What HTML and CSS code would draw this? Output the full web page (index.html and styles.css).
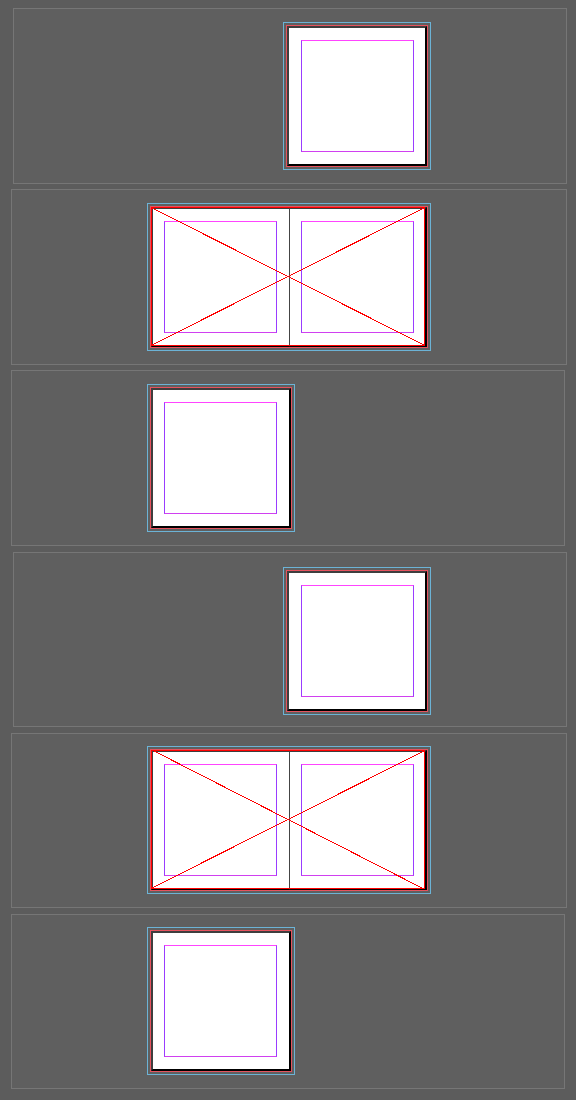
FILE: index.html
```html
<!DOCTYPE html>
<html>
<head>
<meta charset="utf-8">
<link rel="stylesheet" href="styles.css">
</head>
<body>
<div class="panel p1">
  <div class="slug">
    <div class="bleed">
      <div class="page single rp"><div class="margins"></div></div>
    </div>
  </div>
</div>
<div class="panel p2">
  <div class="slug">
    <div class="bleed">
      <div class="spread">
        <div class="page lp"><div class="margins"></div></div>
        <div class="page rp"><div class="margins"></div></div>
        <svg class="xframe" width="276" height="140" viewBox="0 0 276 140" shape-rendering="crispEdges">
          <rect x="0.5" y="0.5" width="273" height="138" fill="none" stroke="#ff0000"/>
          <line x1="1" y1="1" x2="273" y2="138" stroke="#ff0000"/>
          <line x1="1" y1="138" x2="273" y2="1" stroke="#ff0000"/>
        </svg>
      </div>
    </div>
  </div>
</div>
<div class="panel p3">
  <div class="slug">
    <div class="bleed">
      <div class="page single lp"><div class="margins"></div></div>
    </div>
  </div>
</div>
<div class="panel p4">
  <div class="slug">
    <div class="bleed">
      <div class="page single rp"><div class="margins"></div></div>
    </div>
  </div>
</div>
<div class="panel p5">
  <div class="slug">
    <div class="bleed">
      <div class="spread">
        <div class="page lp"><div class="margins"></div></div>
        <div class="page rp"><div class="margins"></div></div>
        <svg class="xframe" width="276" height="140" viewBox="0 0 276 140" shape-rendering="crispEdges">
          <rect x="0.5" y="0.5" width="273" height="138" fill="none" stroke="#ff0000"/>
          <line x1="3" y1="1" x2="271" y2="138" stroke="#ff0000"/>
          <line x1="1" y1="138" x2="273" y2="1" stroke="#ff0000"/>
        </svg>
      </div>
    </div>
  </div>
</div>
<div class="panel p6">
  <div class="slug">
    <div class="bleed">
      <div class="page single lp"><div class="margins"></div></div>
    </div>
  </div>
</div>
</body>
</html>
```
FILE: styles.css
```css
html, body {
  margin: 0;
  padding: 0;
  background: #5c5c5c;
}
body {
  display: flex;
  flex-direction: column;
  align-items: flex-start;
}
.panel {
  box-sizing: border-box;
  border: 1px solid #767676;
  background: #5f5f5f;
  display: flex;
  align-items: flex-start;
}
.p1 { margin: 8px 0 0 13px; width: 554px; height: 176px; padding: 13px 0 0 269px; }
.p2 { margin: 5px 0 0 11px; width: 556px; height: 176px; padding: 13px 0 0 135px; }
.p3 { margin: 5px 0 0 11px; width: 554px; height: 176px; padding: 13px 0 0 135px; }
.p4 { margin: 6px 0 0 13px; width: 554px; height: 175px; padding: 14px 0 0 269px; }
.p5 { margin: 6px 0 0 11px; width: 556px; height: 175px; padding: 12px 0 0 135px; }
.p6 { margin: 6px 0 0 11px; width: 554px; height: 175px; padding: 12px 0 0 135px; }

.slug {
  border: 1px solid #6cb3d6;
  padding: 2px;
}
.bleed {
  border: 1px solid #e6525e;
}
.page {
  box-sizing: border-box;
  background: #ffffff;
  height: 140px;
  border-style: solid;
  border-color: #3e3e3e #000000 #000000 #3e3e3e;
}
.page.single {
  width: 140px;
  border-width: 2px;
}
.page.single.rp { padding: 12px 0 0 12px; }
.page.single.lp { padding: 12px 0 0 11px; }

.spread {
  position: relative;
  display: flex;
  width: 276px;
  height: 140px;
}
.spread .page.lp {
  width: 138px;
  border-width: 2px 0 2px 2px;
  padding: 12px 0 0 11px;
}
.spread .page.rp {
  width: 138px;
  border-width: 2px 2px 2px 1px;
  border-left-color: #444444;
  padding: 12px 0 0 11px;
}
.margins {
  box-sizing: border-box;
  width: 113px;
  height: 112px;
  border-style: solid;
  border-width: 1px;
  border-color: #ff44ff #9a3cff #d040f0 #9a3cff;
}
.xframe {
  position: absolute;
  left: 0;
  top: 0;
  overflow: visible;
}
```
